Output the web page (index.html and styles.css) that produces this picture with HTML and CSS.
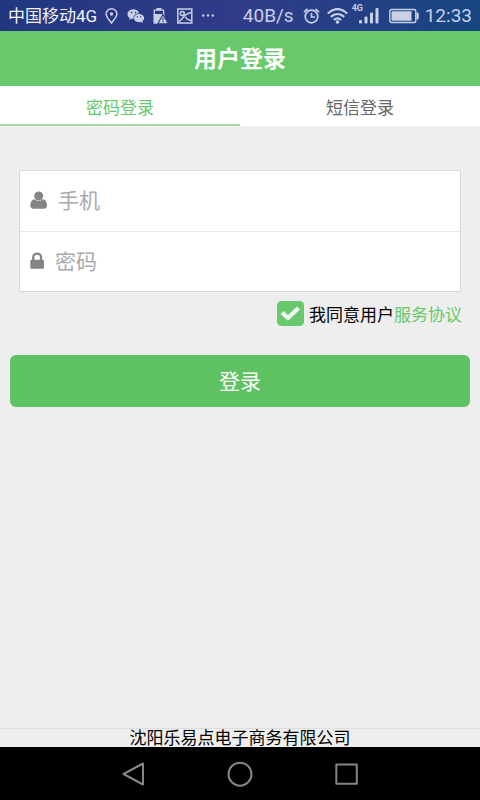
FILE: index.html
```html
<!DOCTYPE html>
<html lang="zh-CN">
<head>
<meta charset="utf-8">
<meta name="viewport" content="width=device-width, initial-scale=1">
<title>用户登录</title>
<link rel="stylesheet" href="styles.css">
</head>
<body>
<div class="status">
  <div class="status-group">
    <span class="carrier">中国移动4G</span>
    <svg width="14" height="16" viewBox="0 0 14 16" fill="none" stroke="currentColor" stroke-width="1.500"><path d="M6.500 15C3.500 11 1.100 8.800 1.100 6A5.400 5.200 0 0 1 11.900 6C11.900 8.800 9.500 11 6.500 15Z"/><circle cx="6.500" cy="6" r="1.700" fill="currentColor" stroke="none"/></svg>
    <svg width="18" height="16" viewBox="0 0 18 16" fill="currentColor"><path fill-rule="evenodd" d="M6.500 1.200C3 1.200.5 3.400.5 6.200C.5 7.800 1.400 9.200 2.700 10L2.200 12L4.400 10.800L6.400 11.100C5.900 7.700 8.700 5.200 12.200 5.200C11.600 2.900 9.400 1.200 6.500 1.200ZM4.600 3.800a.8.8 0 1 1 0 1.600a.8.8 0 1 1 0-1.600ZM8.600 3.800a.8.8 0 1 1 0 1.600a.8.8 0 1 1 0-1.600Z"/><path fill-rule="evenodd" d="M12 5.900C9.200 5.900 7 7.800 7 10.100C7 12.500 9.200 14.300 12 14.300L14 14L15.900 15L15.400 13.300C16.500 12.500 17.200 11.500 17.200 10.100C17.200 7.800 14.800 5.900 12 5.900ZM10.400 8a.7.7 0 1 1 0 1.400a.7.7 0 1 1 0-1.400ZM13.700 8a.7.7 0 1 1 0 1.400a.7.7 0 1 1 0-1.400Z"/></svg>
    <svg width="16" height="16" viewBox="0 0 16 16"><path fill="currentColor" d="M3.500 0H8.500V2H3.500ZM.7 6H11.300V15.500H.7Z"/><path fill="none" stroke="currentColor" stroke-width="1.300" d="M1.300 2.200H10.700V14.800H1.300Z"/><path fill="currentColor" stroke="#2b3983" stroke-width="1.100" stroke-linejoin="round" d="M10 6.500L15.400 15.800H4.800Z"/><path d="M10 9.700v2.600M10 13v1.200" stroke="#2b3983" stroke-width="1.200"/></svg>
    <svg width="16" height="16" viewBox="0 0 16 16" fill="none" stroke="currentColor" stroke-width="1.500"><rect x=".8" y="1" width="14" height="14"/><circle cx="5.300" cy="5.500" r="2"/><path d="M2 13.500C6 11 6.500 6 14.200 4.500M8.500 9C9.500 11.500 11.500 12 14 12.500"/></svg>
    <svg width="14" height="16" viewBox="0 0 14 16" fill="currentColor"><circle cx="2.200" cy="7.500" r="1.200"/><circle cx="7" cy="7.500" r="1.200"/><circle cx="11.800" cy="7.500" r="1.200"/></svg>
  </div>
  <div class="status-group compact">
    <span class="speed">40B/s</span>
    <svg width="18" height="16" viewBox="0 0 18 16" fill="none" stroke="currentColor" stroke-width="1.700"><circle cx="8.500" cy="8.500" r="6.300"/><path d="M1 4.200L4.500 1M12.500 1L16 4.200M8.500 5V9H12"/></svg>
    <svg width="22" height="16" viewBox="0 0 22 16" fill="none" stroke="currentColor" stroke-width="2.200"><path d="M.8 5.500C7-.2 14-.2 20.200 5.500M3.800 8.900C7.800 5 13.200 5 17.200 8.900M6.900 12C9.200 9.900 11.800 9.900 14.100 12"/><circle cx="10.500" cy="14" r="1.800" fill="currentColor" stroke="none"/></svg>
    <span class="signal">
      <span class="signal-type">4G</span>
      <svg width="28" height="16" viewBox="0 0 28 16" fill="currentColor"><rect x="4" y="12" width="3" height="3.500" rx="1"/><rect x="9.500" y="8.500" width="3" height="7" rx="1"/><rect x="15" y="4.500" width="3" height="11" rx="1"/><rect x="20.500" y="0" width="3" height="15.500" rx="1"/></svg>
    </span>
    <svg width="30" height="16" viewBox="0 0 30 16"><rect x=".8" y="1.500" width="26" height="13" rx="1.500" fill="none" stroke="currentColor" stroke-width="1.400"/><path d="M2.500 3.200H22.500V12.800H2.500ZM27.500 4.500H29Q29.700 4.500 29.700 5.500V10.500Q29.700 11.600 29 11.600H27.500Z" fill="currentColor"/></svg>
    <span class="digits">12:33</span>
  </div>
</div>

<header class="title"><h1>用户登录</h1></header>
<nav class="tabs">
  <a class="tab active" href="#password">密码登录</a>
  <a class="tab" href="#sms">短信登录</a>
</nav>

<main>
  <form>
    <div class="fields">
      <div class="field">
        <label for="phone" aria-label="手机"><svg width="18" height="20" viewBox="0 0 18 20" fill="currentColor"><path d="M4.500 8.300C1.800 8.600.3 11 .3 14.500C.3 16.500 1.500 17.700 3.300 17.700H14C15.800 17.700 17 16.500 17 14.500C17 11 15.500 8.600 12.800 8.300C10.300 10.500 7 10.500 4.500 8.300Z"/><circle cx="8.700" cy="5" r="4.500"/></svg></label>
        <input id="phone" type="tel" placeholder="手机">
      </div>
      <div class="field">
        <label for="password" aria-label="密码"><svg width="15" height="20" viewBox="0 0 15 20"><rect x=".3" y="7.700" width="13.700" height="9" rx="1.200" fill="currentColor"/><path d="M3.200 8.500V5.500C3.200.2 11.100.2 11.100 5.500V8.500" fill="none" stroke="currentColor" stroke-width="2.300"/></svg></label>
        <input id="password" type="password" placeholder="密码">
      </div>
    </div>
    <div class="agree">
      <input id="agree" type="checkbox" checked>
      <label for="agree"><svg class="check" width="27" height="28" viewBox="0 0 27 28"><rect width="27" height="25" rx="4.500" fill="#67c96c"/><path d="M5 11.500L11 17L21.500 7" fill="none" stroke="#f3f8f3" stroke-width="4.200"/></svg>我同意用户</label><a href="#terms">服务协议</a>
    </div>
    <button class="submit" type="submit">登录</button>
  </form>
</main>

<footer class="company">沈阳乐易点电子商务有限公司</footer>
<div class="navbar">
  <button type="button" aria-label="返回"><svg width="26" height="26" viewBox="0 0 26 26"><path d="M23 2.500V23.500L3.500 13Z"/></svg></button>
  <button type="button" aria-label="主页"><svg width="26" height="26" viewBox="0 0 26 26"><circle cx="13" cy="13.200" r="11.500"/></svg></button>
  <button type="button" aria-label="最近任务"><svg width="26" height="26" viewBox="0 0 26 26"><rect x="2.300" y="3.500" width="20.500" height="19.300"/></svg></button>
</div>
</body>
</html>
```

FILE: styles.css
```css
* {
  box-sizing: border-box;
}

body {
  margin: 0;
  min-height: 100vh;
  display: flex;
  flex-direction: column;
  background: #eee;
  color: #000;
  font: 17px/20px Roboto, "Noto Sans CJK SC", sans-serif;
}

svg {
  display: block;
  flex: none;
}

a {
  color: #67c96c;
  text-decoration: none;
}

input,
button {
  font: inherit;
}

.status {
  display: flex;
  justify-content: space-between;
  align-items: center;
  height: 31px;
  padding: 1px 8px 0;
  background: linear-gradient(100deg, #223780, #303b89 50%, #164681);
  color: #c9cfe5;
}

.status-group {
  display: flex;
  align-items: center;
  gap: 8px;
}

.status-group.compact {
  gap: 6px;
}

.carrier {
  color: #f2f4fa;
}

.digits {
  font-size: 19px;
}

.speed {
  padding-right: 3px;
  font-size: 19px;
}

.signal {
  position: relative;
}

.signal-type {
  position: absolute;
  left: -3px;
  top: -4px;
  font-size: 9px;
  font-weight: bold;
  line-height: 9px;
}

.title {
  display: flex;
  align-items: center;
  justify-content: center;
  height: 55px;
  padding-top: 2px;
  background: #67c96b;
  color: #fff;
}

.title h1 {
  margin: 0;
  font-size: 23px;
  line-height: 32px;
}

.tabs {
  display: flex;
  background: #fff;
}

.tab {
  flex: 1;
  padding: 12px 0 6px;
  border-bottom: 2px solid #fff;
  color: #666;
  text-align: center;
}

.tab.active {
  border-color: #a9dcab;
  color: #67c96c;
}

main {
  flex: 1;
  padding: 44px 10px 0;
}

.fields {
  margin: 0 9px;
  border: 1px solid #d9d9d9;
  background: #fff;
}

.field {
  display: flex;
  align-items: center;
  gap: 10px;
  height: 60px;
  padding: 0 10px;
  color: #858585;
}

.field + .field {
  border-top: 1px solid #e6e6e6;
}

.field input {
  flex: 1;
  min-width: 0;
  height: 40px;
  padding: 0;
  border: 0;
  outline: 0;
  background: none;
  color: #333;
  font-size: 21px;
}

.field input::placeholder {
  color: #aaa;
}

.agree {
  display: flex;
  align-items: center;
  justify-content: flex-end;
  height: 46px;
  padding-right: 8px;
}

.agree input {
  position: absolute;
  opacity: 0;
}

.agree label {
  display: flex;
  align-items: center;
  gap: 5px;
}

.agree input:not(:checked) + label path {
  display: none;
}

.submit {
  display: block;
  width: 100%;
  height: 52px;
  margin-top: 17px;
  padding: 1px 0 0;
  border: 0;
  border-radius: 6px;
  background: #5ec262;
  color: #fff;
  font-size: 21px;
}

.company {
  border-top: 1px solid #ddd;
  line-height: 18px;
  text-align: center;
}

.navbar {
  display: flex;
  justify-content: center;
  gap: 81px;
  padding: 14px 0 13px;
  background: #000;
}

.navbar button {
  padding: 0;
  border: 0;
  background: none;
}

.navbar svg {
  fill: none;
  stroke: #858585;
  stroke-width: 2;
  stroke-linejoin: round;
}
```
